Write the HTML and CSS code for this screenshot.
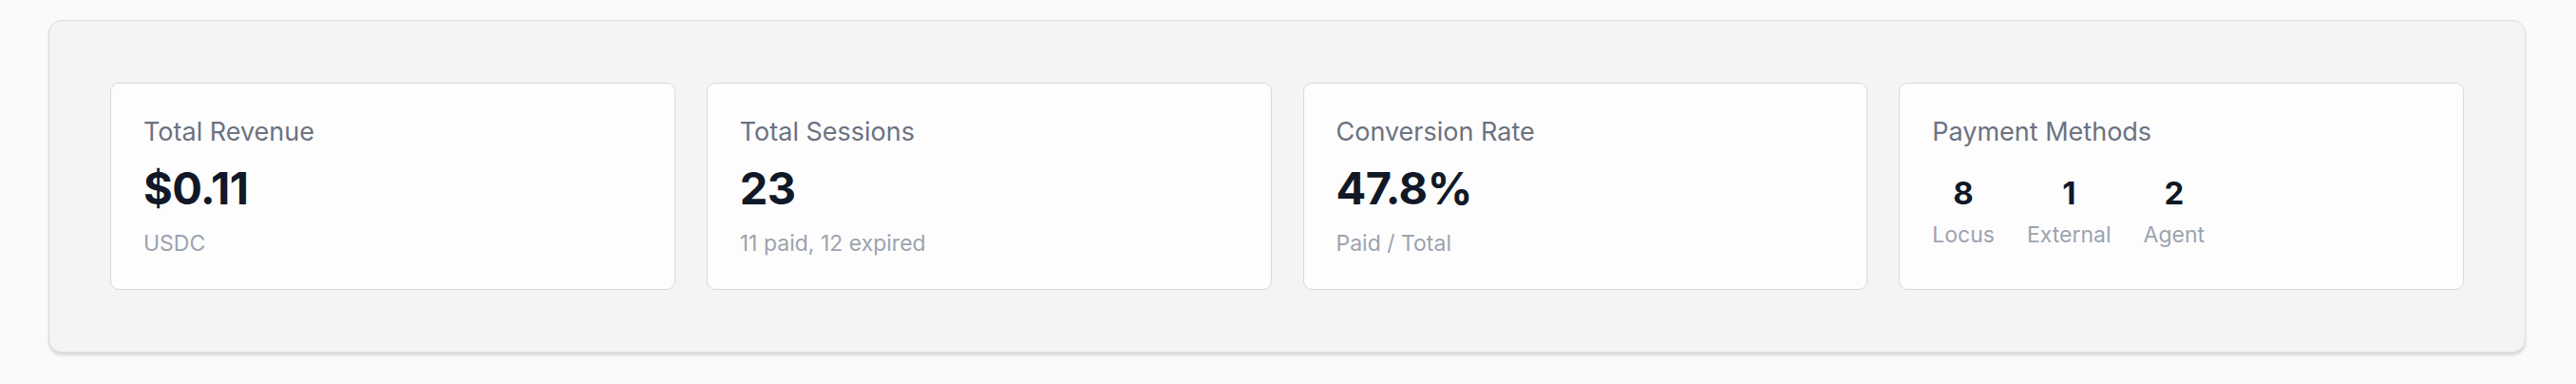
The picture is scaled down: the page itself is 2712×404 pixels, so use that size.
FILE: index.html
```html
<!DOCTYPE html>
<html lang="en">
<head>
    <meta charset="UTF-8">
    <meta name="viewport" content="width=device-width, initial-scale=1.0">
    <title>Checkout stats</title>
    <link rel="stylesheet" href="styles.css">
</head>
<body>
    <div class="page">
        <div class="panel">
            <div class="stats">
                <div class="card">
                    <div class="label">Total Revenue</div>
                    <div class="value">$0.11</div>
                    <div class="sub">USDC</div>
                </div>
                <div class="card">
                    <div class="label">Total Sessions</div>
                    <div class="value">23</div>
                    <div class="sub">11 paid, 12 expired</div>
                </div>
                <div class="card">
                    <div class="label">Conversion Rate</div>
                    <div class="value">47.8%</div>
                    <div class="sub">Paid / Total</div>
                </div>
                <div class="card">
                    <div class="label">Payment Methods</div>
                    <div class="methods">
                        <div class="method">
                            <div class="method-num">8</div>
                            <div class="method-name">Locus</div>
                        </div>
                        <div class="method">
                            <div class="method-num">1</div>
                            <div class="method-name">External</div>
                        </div>
                        <div class="method">
                            <div class="method-num">2</div>
                            <div class="method-name">Agent</div>
                        </div>
                    </div>
                </div>
            </div>
        </div>
    </div>
</body>
</html>
```

FILE: styles.css
```css
body{
    margin: 0;
    background-color: #fafafa;
    font-family: Inter, "Noto Sans", sans-serif;
}
.page{
    padding: 21px 53px 30px 51px;
}
.panel{
    background-color: #f4f4f6;
    border: 1px solid #dcdcdf;
    border-radius: 14px;
    box-shadow: 0 3px 3px rgba(0, 0, 0, 0.13);
    padding: 65px 64px;
}
.stats{
    display: grid;
    grid-template-columns: repeat(4, 1fr);
    gap: 33px;
}
.card{
    height: 218px;
    box-sizing: border-box;
    background-color: #fdfdfd;
    border: 1px solid #d9d9dc;
    border-radius: 9px;
    padding: 35px 34px 0;
}
.card .label{
    font-size: 27px;
    line-height: 32px;
    color: #6b7280;
}
.card .value{
    margin-top: 16px;
    font-size: 47px;
    line-height: 54px;
    font-weight: 700;
    color: #111827;
    letter-spacing: -0.5px;
}
.card .sub{
    margin-top: 16px;
    font-size: 23px;
    line-height: 30px;
    color: #9ca3af;
}
.methods{
    display: flex;
    gap: 34px;
    margin-top: 28px;
}
.method{
    text-align: center;
}
.method .method-num{
    font-size: 33px;
    line-height: 40px;
    font-weight: 700;
    color: #111827;
}
.method .method-name{
    margin-top: 9px;
    font-size: 23px;
    line-height: 30px;
    color: #9ca3af;
}
```
